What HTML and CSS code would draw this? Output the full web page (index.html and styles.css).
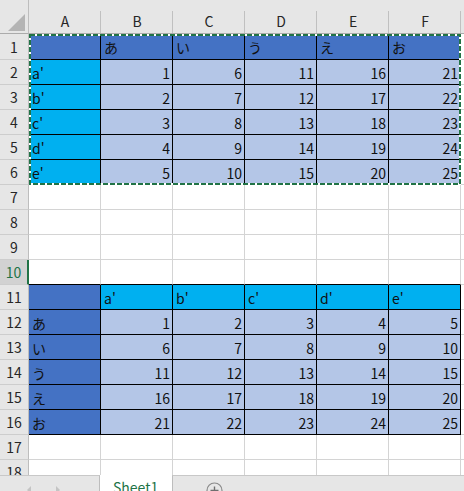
FILE: index.html
```html
<!DOCTYPE html>
<html lang="ja">
<head>
    <meta charset="UTF-8">
    <title>Sheet1</title>
    <link rel="stylesheet" href="styles.css">
</head>
<body>
    <div class="sheet">
        <div class="corner">
            <svg width="28" height="33" viewBox="0 0 28 33"><polygon points="25,14 25,31 8,31" fill="#b4b4b4"/></svg>
        </div>
        <div class="ch">A</div><div class="ch">B</div><div class="ch">C</div><div class="ch">D</div><div class="ch">E</div><div class="ch">F</div><div class="ch last"></div>

        <div class="rh">1</div><div class="c dk"></div><div class="c dk">あ</div><div class="c dk">い</div><div class="c dk">う</div><div class="c dk">え</div><div class="c dk">お</div><div class="c"></div>
        <div class="rh">2</div><div class="c cy">a'</div><div class="c lt r">1</div><div class="c lt r">6</div><div class="c lt r">11</div><div class="c lt r">16</div><div class="c lt r">21</div><div class="c"></div>
        <div class="rh">3</div><div class="c cy">b'</div><div class="c lt r">2</div><div class="c lt r">7</div><div class="c lt r">12</div><div class="c lt r">17</div><div class="c lt r">22</div><div class="c"></div>
        <div class="rh">4</div><div class="c cy">c'</div><div class="c lt r">3</div><div class="c lt r">8</div><div class="c lt r">13</div><div class="c lt r">18</div><div class="c lt r">23</div><div class="c"></div>
        <div class="rh">5</div><div class="c cy">d'</div><div class="c lt r">4</div><div class="c lt r">9</div><div class="c lt r">14</div><div class="c lt r">19</div><div class="c lt r">24</div><div class="c"></div>
        <div class="rh">6</div><div class="c cy">e'</div><div class="c lt r">5</div><div class="c lt r">10</div><div class="c lt r">15</div><div class="c lt r">20</div><div class="c lt r">25</div><div class="c"></div>
        <div class="rh">7</div><div class="c"></div><div class="c"></div><div class="c"></div><div class="c"></div><div class="c"></div><div class="c"></div><div class="c"></div>
        <div class="rh">8</div><div class="c"></div><div class="c"></div><div class="c"></div><div class="c"></div><div class="c"></div><div class="c"></div><div class="c"></div>
        <div class="rh">9</div><div class="c"></div><div class="c"></div><div class="c"></div><div class="c"></div><div class="c"></div><div class="c"></div><div class="c"></div>
        <div class="rh sel">10</div><div class="c ab"></div><div class="c ab"></div><div class="c ab"></div><div class="c ab"></div><div class="c ab"></div><div class="c ab"></div><div class="c"></div>
        <div class="rh">11</div><div class="c dk"></div><div class="c cy">a'</div><div class="c cy">b'</div><div class="c cy">c'</div><div class="c cy">d'</div><div class="c cy">e'</div><div class="c"></div>
        <div class="rh">12</div><div class="c dk">あ</div><div class="c lt r">1</div><div class="c lt r">2</div><div class="c lt r">3</div><div class="c lt r">4</div><div class="c lt r">5</div><div class="c"></div>
        <div class="rh">13</div><div class="c dk">い</div><div class="c lt r">6</div><div class="c lt r">7</div><div class="c lt r">8</div><div class="c lt r">9</div><div class="c lt r">10</div><div class="c"></div>
        <div class="rh">14</div><div class="c dk">う</div><div class="c lt r">11</div><div class="c lt r">12</div><div class="c lt r">13</div><div class="c lt r">14</div><div class="c lt r">15</div><div class="c"></div>
        <div class="rh">15</div><div class="c dk">え</div><div class="c lt r">16</div><div class="c lt r">17</div><div class="c lt r">18</div><div class="c lt r">19</div><div class="c lt r">20</div><div class="c"></div>
        <div class="rh">16</div><div class="c dk">お</div><div class="c lt r">21</div><div class="c lt r">22</div><div class="c lt r">23</div><div class="c lt r">24</div><div class="c lt r">25</div><div class="c"></div>
        <div class="rh">17</div><div class="c"></div><div class="c"></div><div class="c"></div><div class="c"></div><div class="c"></div><div class="c"></div><div class="c"></div>
        <div class="rh">18</div><div class="c"></div><div class="c"></div><div class="c"></div><div class="c"></div><div class="c"></div><div class="c"></div><div class="c"></div>

        <!-- copy range marquee -->
        <svg class="ants" width="432" height="151" viewBox="0 0 432 151">
            <rect x="1" y="1" width="430" height="149" fill="none" stroke="#ffffff" stroke-width="2"/>
            <rect x="1" y="1" width="430" height="149" fill="none" stroke="#217346" stroke-width="2" stroke-dasharray="5 2"/>
        </svg>
    </div>

    <div class="tabs">
        <div class="nav">
            <svg width="5" height="8" viewBox="0 0 5 8"><polygon points="4,0 4,8 0,4" fill="#c4c4c4"/></svg>
            <svg width="5" height="8" viewBox="0 0 5 8"><polygon points="1,0 1,8 5,4" fill="#c4c4c4"/></svg>
        </div>
        <div class="tab">Sheet1</div>
        <div class="rest">
            <svg class="add" width="17" height="17" viewBox="0 0 17 17">
                <circle cx="8.5" cy="8.5" r="7.5" fill="none" stroke="#8a8a8a" stroke-width="1.2"/>
                <path d="M8.5 4.5v8M4.5 8.5h8" stroke="#6e6e6e" stroke-width="1.4"/>
            </svg>
        </div>
    </div>
</body>
</html>
```

FILE: styles.css
```css
body {
  margin: 0;
  width: 464px;
  height: 491px;
  overflow: hidden;
  background: #ffffff;
  font-family: "Noto Sans CJK JP", "Noto Sans", sans-serif;
  font-size: 14px;
  color: #111111;
}

.sheet {
  position: relative;
  height: 475px;
  overflow: hidden;
  display: grid;
  grid-template-columns: 29px repeat(6, 72px) 3px;
  grid-template-rows: 34px 26px repeat(17, 25px);
}

.sheet > div {
  box-sizing: border-box;
}

.corner {
  background: #e6e6e6;
  border-bottom: 1px solid #ababab;
  border-right: 1px solid #bdbdbd;
}

.corner svg {
  display: block;
}

.ch {
  background: #e6e6e6 linear-gradient(#c0c0c0, #c0c0c0) right bottom / 1px 22px no-repeat;
  border-bottom: 1px solid #ababab;
  padding-top: 9px;
  display: flex;
  align-items: center;
  justify-content: center;
  color: #262626;
}

.ch.last {
  background: #e6e6e6;
}

.rh {
  background: #e6e6e6;
  border-right: 1px solid #bdbdbd;
  border-bottom: 1px solid #cdcdcd;
  display: flex;
  align-items: center;
  justify-content: center;
  color: #262626;
}

.rh.sel {
  background: #d2d2d2;
  color: #217346;
  border-right: 2px solid #217346;
}

.c {
  border-right: 1px solid #d4d4d4;
  border-bottom: 1px solid #d4d4d4;
  padding: 1px 3px 0 3px;
  display: flex;
  align-items: center;
  white-space: nowrap;
  overflow: hidden;
}

.r {
  justify-content: flex-end;
  padding-right: 2px;
}

.dk {
  background: #4472c4;
  border-color: #000000;
}

.cy {
  background: #00b0f0;
  border-color: #000000;
}

.lt {
  background: #b4c6e7;
  border-color: #000000;
}

.ab {
  border-bottom-color: #000000;
}

.ants {
  position: absolute;
  left: 29px;
  top: 34px;
}

.tabs {
  display: flex;
  height: 16px;
  overflow: hidden;
}

.nav {
  width: 100px;
  box-sizing: border-box;
  background: #e6e6e6;
  border-top: 1px solid #c8c8c8;
  border-right: 1px solid #bdbdbd;
  display: flex;
  gap: 23px;
  padding: 10px 0 0 27px;
}

.nav svg {
  display: block;
}

.tab {
  width: 72px;
  background: #ffffff;
  color: #217346;
  padding: 5px 0 0 13px;
  box-sizing: border-box;
  line-height: 1;
  font-size: 14px;
}

.rest {
  flex: 1;
  background: #e6e6e6;
  border-top: 1px solid #c8c8c8;
  border-left: 1px solid #bdbdbd;
  padding: 6px 0 0 33px;
}

.add {
  display: block;
}
```
